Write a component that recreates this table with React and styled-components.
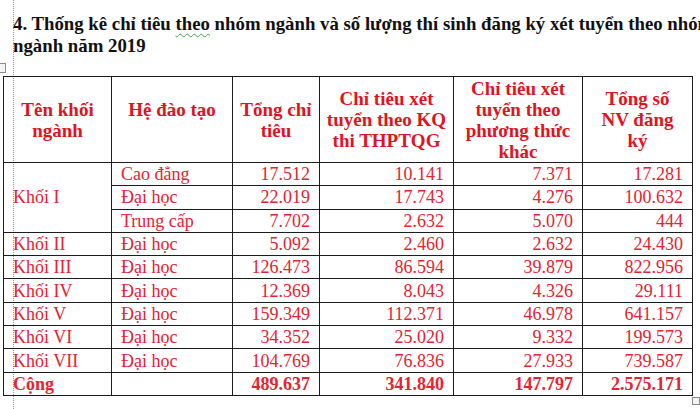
import styled, { createGlobalStyle } from 'styled-components'

const GlobalStyle = createGlobalStyle`
	html, body {
		margin: 0;
		padding: 0;
		background: #fff;
	}
	body {
		width: 700px;
		height: 409px;
		overflow: hidden;
		font-family: 'Liberation Serif', 'Times New Roman', serif;
	}
`

const rows = [
	{ group: 'Khối I', span: 3, type: 'Cao đẳng', values: ['17.512', '10.141', '7.371', '17.281'] },
	{ type: 'Đại học', values: ['22.019', '17.743', '4.276', '100.632'] },
	{ type: 'Trung cấp', values: ['7.702', '2.632', '5.070', '444'] },
	{ group: 'Khối II', type: 'Đại học', values: ['5.092', '2.460', '2.632', '24.430'] },
	{ group: 'Khối III', type: 'Đại học', values: ['126.473', '86.594', '39.879', '822.956'] },
	{ group: 'Khối IV', type: 'Đại học', values: ['12.369', '8.043', '4.326', '29.111'] },
	{ group: 'Khối V', type: 'Đại học', values: ['159.349', '112.371', '46.978', '641.157'] },
	{ group: 'Khối VI', type: 'Đại học', values: ['34.352', '25.020', '9.332', '199.573'] },
	{ group: 'Khối VII', type: 'Đại học', values: ['104.769', '76.836', '27.933', '739.587'] },
]

const totals = ['489.637', '341.840', '147.797', '2.575.171']

const widths = [108, 121, 87, 134, 129, 110]

const App = () => {
	return (
		<>
			<GlobalStyle />
			<Page>
				<MarginGuide />
				<MoveHandle />
				<Title>
					4. Thống kê chỉ tiêu <Squiggle>theo</Squiggle> nhóm ngành và số lượng thí sinh đăng ký xét tuyển theo nhóm
					<br />
					ngành năm 2019
				</Title>
				<TableWrap>
					<Table>
						<colgroup>
							{widths.map((w, i) => (
								<col key={i} style={{ width: w }} />
							))}
						</colgroup>
						<thead>
							<tr>
								<HeadCell>Tên khối<br />ngành</HeadCell>
								<HeadCell>Hệ đào tạo<br />&nbsp;</HeadCell>
								<HeadCell>Tổng chỉ<br />tiêu</HeadCell>
								<HeadCell>Chỉ tiêu xét<br />tuyển theo KQ<br />thi THPTQG</HeadCell>
								<HeadCell>Chỉ tiêu xét<br />tuyển theo<br />phương thức<br />khác</HeadCell>
								<HeadCell>Tổng số<br />NV đăng<br />ký</HeadCell>
							</tr>
						</thead>
						<tbody>
							{rows.map((row, i) => (
								<Row key={i}>
									{row.group && <Cell rowSpan={row.span || 1}>{row.group}</Cell>}
									<Cell>{row.type}</Cell>
									{row.values.map((v, j) => (
										<NumCell key={j}>{v}</NumCell>
									))}
								</Row>
							))}
							<Row>
								<Cell $bold>Cộng</Cell>
								<Cell />
								{totals.map((v, j) => (
									<NumCell key={j} $bold>{v}</NumCell>
								))}
							</Row>
						</tbody>
					</Table>
					<ResizeHandle />
				</TableWrap>
			</Page>
		</>
	)
}
export default App

const Page = styled.main`
	position: relative;
	width: 700px;
	height: 409px;
	overflow: hidden;
	padding: 0 0 0 3px;
	box-sizing: border-box;
`

const MarginGuide = styled.div`
	position: absolute;
	left: 13px;
	top: 0;
	bottom: 0;
	border-left: 1px dotted #9a9a9a;
	pointer-events: none;
`

const MoveHandle = styled.div`
	position: absolute;
	left: -4px;
	top: 63px;
	width: 8px;
	height: 8px;
	border: 1px solid #8a8a8a;
	background: #f4f4f4;
`

const Title = styled.h1`
	margin: 0;
	padding: 13px 0 0 10px;
	width: 780px;
	white-space: nowrap;
	font-size: 18.8px;
	line-height: 22px;
	font-weight: bold;
	color: #111;
`

const Squiggle = styled.span`
	text-decoration: underline wavy #3fae3f;
	text-decoration-thickness: 1px;
	text-underline-offset: 3px;
`

const TableWrap = styled.div`
	position: relative;
	margin-top: 19px;
	width: 689px;
`

const Table = styled.table`
	border-collapse: collapse;
	table-layout: fixed;
	width: 689px;
	color: #e62330;
	font-size: 18px;
	font-family: 'Liberation Serif', 'Times New Roman', serif;
`

const HeadCell = styled.th`
	height: 85px;
	padding: 0 2px;
	border: 1.5px solid #1c1c1c;
	font-weight: bold;
	font-size: 19px;
	line-height: 21px;
	color: #e0141f;
	text-align: center;
	vertical-align: middle;
	white-space: nowrap;
`

const Row = styled.tr`
	height: 23.3px;
`

const Cell = styled.td`
	padding: 0 8px 0 9px;
	border: 1.5px solid #1c1c1c;
	line-height: 20px;
	font-weight: ${p => (p.$bold ? 'bold' : 'normal')};
	font-size: 18px;
	white-space: nowrap;
	vertical-align: middle;
`

const NumCell = styled(Cell)`
	text-align: right;
	padding: 0 9px 0 4px;
`

const ResizeHandle = styled.div`
	position: absolute;
	right: -8px;
	bottom: -9px;
	width: 6px;
	height: 6px;
	border: 1px solid #8a8a8a;
	background: #f4f4f4;
`
